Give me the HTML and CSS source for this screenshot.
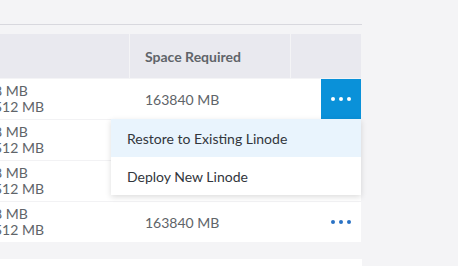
FILE: index.html
```html
<!DOCTYPE html>
<html>
<head>
<meta charset="utf-8">
<link rel="stylesheet" href="styles.css">
</head>
<body>
<div class="page">
  <div class="topbar"></div>
  <div class="table">
    <div class="thead">
      <div class="th"></div>
      <div class="th">Space Required</div>
      <div class="th"></div>
    </div>
    <div class="row">
      <div class="cell first"><div class="stack"><span>8 MB</span><span>512 MB</span></div></div>
      <div class="cell">163840 MB</div>
      <div class="cell action">
        <button class="dots active"><i></i><i></i><i></i></button>
      </div>
      <div class="menu">
        <div class="item hover">Restore to Existing Linode</div>
        <div class="item">Deploy New Linode</div>
      </div>
    </div>
    <div class="row">
      <div class="cell first"><div class="stack"><span>8 MB</span><span>512 MB</span></div></div>
      <div class="cell">163840 MB</div>
      <div class="cell action"><button class="dots"><i></i><i></i><i></i></button></div>
    </div>
    <div class="row">
      <div class="cell first"><div class="stack"><span>8 MB</span><span>512 MB</span></div></div>
      <div class="cell">163840 MB</div>
      <div class="cell action"><button class="dots"><i></i><i></i><i></i></button></div>
    </div>
    <div class="row last">
      <div class="cell first"><div class="stack"><span>8 MB</span><span>512 MB</span></div></div>
      <div class="cell">163840 MB</div>
      <div class="cell action"><button class="dots"><i></i><i></i><i></i></button></div>
    </div>
  </div>
  <div class="next"></div>
</div>
</body>
</html>
```
FILE: styles.css
```css
html, body {
  margin: 0;
  padding: 0;
  background: #f4f4f6;
  font-family: Lato, "Liberation Sans", sans-serif;
  font-size: 14px;
  color: #606469;
  overflow: hidden;
}
.page {
  width: 362px;
  height: 266px;
}
.topbar {
  height: 24px;
  border-bottom: 1px solid #d8d8de;
  margin-bottom: 9px;
}
.table {
  width: 361px;
}
.thead {
  display: grid;
  grid-template-columns: 129px 160px 70px;
  column-gap: 1px;
  height: 44px;
  margin-bottom: 1px;
}
.th {
  background: #e9e9ef;
  font-weight: 700;
  display: flex;
  align-items: center;
  padding-left: 15px;
  color: #606469;
}
.row {
  position: relative;
  display: grid;
  grid-template-columns: 130px 161px 70px;
  height: 40px;
  background: #fff;
  border-bottom: 1px solid #f2f2f4;
}
.row.last {
  border-bottom: none;
}
.cell {
  display: flex;
  align-items: center;
  padding-left: 15px;
  white-space: nowrap;
}
.cell.first {
  padding-left: 0;
  overflow: hidden;
}
.stack {
  display: flex;
  flex-direction: column;
  line-height: 16px;
  margin-left: -6px;
}
.cell.action {
  padding-left: 0;
  justify-content: flex-end;
}
.dots {
  width: 40px;
  height: 40px;
  border: none;
  padding: 0;
  background: transparent;
  display: flex;
  align-items: center;
  justify-content: center;
  gap: 4px;
}
.dots i {
  width: 4px;
  height: 4px;
  border-radius: 50%;
  background: #2a72c4;
}
.dots.active {
  background: #0a91d9;
}
.dots.active i {
  background: #fff;
}
.menu {
  position: absolute;
  top: 40px;
  right: 0;
  width: 250px;
  background: #fff;
  box-shadow: 0 2px 6px rgba(0, 0, 0, 0.14);
  z-index: 5;
  color: #32363c;
}
.item {
  height: 38px;
  display: flex;
  align-items: center;
  padding-left: 16px;
}
.item.hover {
  background: #e9f4fd;
}
.next {
  margin-top: 17px;
  height: 20px;
  background: #fff;
}
```
